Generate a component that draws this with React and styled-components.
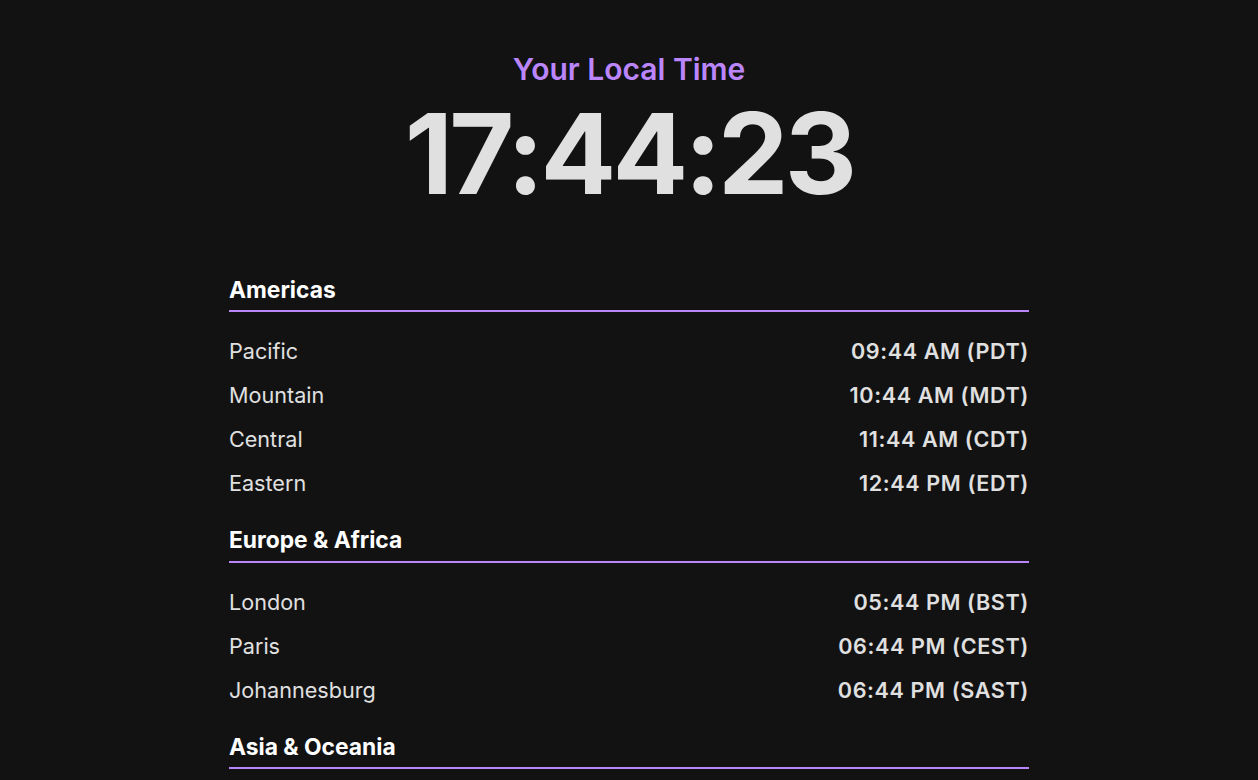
import React from 'react';
import styled, { createGlobalStyle } from 'styled-components';

const GlobalStyle = createGlobalStyle`
  body {
    margin: 0;
    background: #121212;
    color: #e0e0e0;
    font-family: 'Inter', 'Noto Sans', sans-serif;
  }
`;

const Page = styled.main`
  max-width: 800px;
  margin: 0 auto;
  padding: 51px 0 40px;
`;

const Hero = styled.header`
  text-align: center;
  margin-bottom: 67px;
`;

const Label = styled.h1`
  margin: 0 0 10px;
  font-size: 30px;
  line-height: 36px;
  font-weight: 600;
  color: #bb86fc;
`;

const Clock = styled.div`
  font-size: 112px;
  line-height: 1;
  font-weight: 700;
  color: #e0e0e0;
  letter-spacing: -3.8px;
`;

const Section = styled.section`
  margin-bottom: 21px;
`;

const RegionTitle = styled.h2`
  margin: 0 0 17px;
  padding-bottom: 7px;
  border-bottom: 2px solid #bb86fc;
  font-size: 22.8px;
  line-height: 1.2;
  font-weight: 700;
  color: #ffffff;
`;

const Row = styled.div`
  display: flex;
  justify-content: space-between;
  align-items: center;
  height: 44px;
  font-size: 21.6px;
`;

const City = styled.span`
  font-weight: 400;
  color: #e0e0e0;
`;

const Time = styled.span`
  font-weight: 600;
  letter-spacing: 0.6px;
  color: #e0e0e0;
`;

const regions = [
  {
    name: 'Americas',
    zones: [
      ['Pacific', '09:44 AM (PDT)'],
      ['Mountain', '10:44 AM (MDT)'],
      ['Central', '11:44 AM (CDT)'],
      ['Eastern', '12:44 PM (EDT)'],
    ],
  },
  {
    name: 'Europe & Africa',
    zones: [
      ['London', '05:44 PM (BST)'],
      ['Paris', '06:44 PM (CEST)'],
      ['Johannesburg', '06:44 PM (SAST)'],
    ],
  },
  {
    name: 'Asia & Oceania',
    zones: [
      ['Dubai', '08:44 PM (GST)'],
      ['Tokyo', '01:44 AM (JST)'],
      ['Sydney', '02:44 AM (AEST)'],
    ],
  },
];

const App = () => (
  <>
    <GlobalStyle />
    <Page>
      <Hero>
        <Label>Your Local Time</Label>
        <Clock>17:44:23</Clock>
      </Hero>
      {regions.map((r) => (
        <Section key={r.name}>
          <RegionTitle>{r.name}</RegionTitle>
          {r.zones.map(([city, time]) => (
            <Row key={city}>
              <City>{city}</City>
              <Time>{time}</Time>
            </Row>
          ))}
        </Section>
      ))}
    </Page>
  </>
);

export default App;
